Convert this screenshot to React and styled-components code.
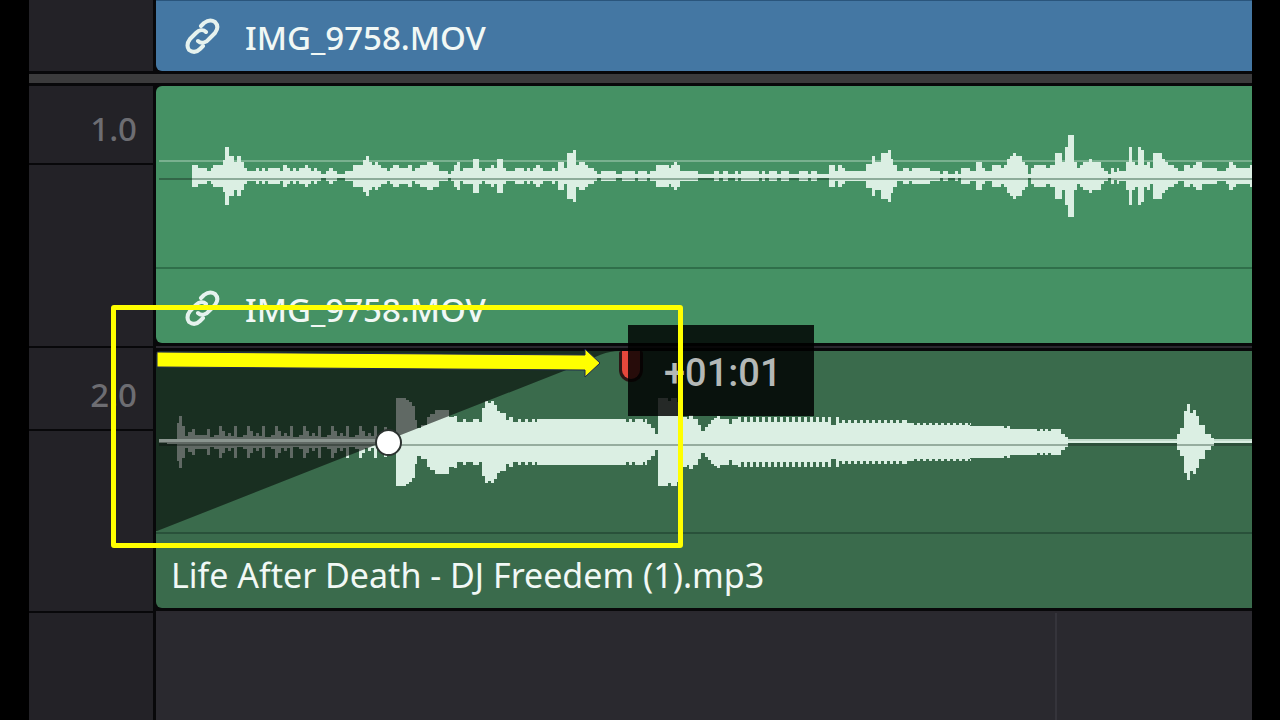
import React from 'react';
import styled, { createGlobalStyle } from 'styled-components';

const GlobalStyle = createGlobalStyle`
  * { box-sizing: border-box; }
  body { margin: 0; background: #000; font-family: "Noto Sans", sans-serif; }
`;

const Timeline = styled.main`
  position: relative;
  display: flex;
  flex-direction: column;
  min-height: 100vh;
  padding: 0 28px 0 29px;
  overflow: hidden;
  background: #000;
`;

const Track = styled.section`
  display: flex;
  flex: ${(p) => (p.$fill ? '1 0 auto' : '0 0 auto')};
`;

const Header = styled.div`
  display: flex;
  flex-direction: column;
  flex: 0 0 127px;
  border-right: 3px solid #08080a;
  border-bottom: ${(p) => (p.$open ? 0 : 2)}px solid #08080a;
  background: #232227;
`;

const HeaderValue = styled.div`
  display: flex;
  align-items: center;
  justify-content: flex-end;
  height: ${(p) => p.$height}px;
  padding: ${(p) => p.$top}px 16px 0 0;
  border-bottom: 2px solid #08080a;
  color: #6d6d72;
  font-size: 33px;
  font-weight: 500;
  line-height: 44px;
`;

const Lane = styled.div`
  flex: 1;
  min-width: 0;
  padding: ${(p) => p.$top}px 0 3px;
  border-bottom: 2px solid #2a282e;
  background: #08080a;
`;

const EmptyLane = styled.div`
  flex: 1;
  background: #2a292f;
`;

const FrameMark = styled.div`
  width: 82%;
  height: 100%;
  border-right: 2px solid #35343b;
  box-sizing: content-box;
`;

const VideoLane = styled.div`
  flex: 1;
  min-width: 0;
  background: #08080a;
`;

const VideoClip = styled.article`
  display: flex;
  align-items: center;
  height: 71px;
  padding: 4px 0 0 28px;
  border-top: 1px solid #2a557c;
  border-radius: 0 0 0 6px;
  background: #4477a3;
`;

const Splitter = styled.div`
  height: 15px;
  flex: none;
  border: solid #08080a;
  border-width: 3px 0;
  background: #3b3b3c;
`;

const AudioClip = styled.article`
  overflow: hidden;
  border-radius: 6px 0 0 6px;
  background: ${(p) => p.$color};
`;

const Wave = styled.svg`
  display: block;
`;

const ClipFooter = styled.div`
  display: flex;
  align-items: center;
  height: 76px;
  padding: 8px 0 0 ${(p) => (p.$linked ? 28 : 15)}px;
  border-top: 2px solid ${(p) => p.$line};
`;

const ClipName = styled.span`
  color: #f1f8f5;
  font-size: ${(p) => (p.$long ? 34 : 33)}px;
  font-weight: ${(p) => (p.$long ? 400 : 500)};
  line-height: 44px;
  white-space: nowrap;
`;

const LinkSvg = styled.svg`
  flex: none;
  margin: 0 24px 4px 0;
  fill: none;
  stroke: #e6f2ee;
  stroke-width: 4;
  stroke-linecap: round;
  stroke-linejoin: round;
`;

const FadeHandle = styled.div`
  position: absolute;
  left: 619px;
  top: 351px;
  width: 24px;
  height: 31px;
  border: 3px solid #2b1716;
  border-top: 0;
  border-radius: 2px 2px 12px 12px;
  background: #e5483c;
`;

const Tooltip = styled.output`
  position: absolute;
  left: 628px;
  top: 325px;
  width: 186px;
  height: 91px;
  padding-left: 36px;
  background: rgba(0, 0, 0, 0.83);
  color: #b4b8b6;
  font-family: Roboto, sans-serif;
  font-size: 38px;
  font-weight: 500;
  line-height: 96px;
`;

const CurveKnob = styled.div`
  position: absolute;
  left: 375px;
  top: 429px;
  width: 27px;
  height: 27px;
  border: 2px solid #2c3330;
  border-radius: 50%;
  background: #fff;
`;

const Highlight = styled.div`
  position: absolute;
  left: 111px;
  top: 305px;
  width: 572px;
  height: 243px;
  border: 5px solid #ff0;
  border-radius: 3px;
`;

const Arrow = styled.svg`
  position: absolute;
  left: 156px;
  top: 348px;
`;

/* Each pair is the x where a bar starts and its half height. */
const VOICE = [
  [192,11],[198,8],[207,5],[211,8],[213,11],[223,16],[225,29],[229,20],[234,14],[237,20],[241,14],[244,8],[247,5],
  [256,8],[259,5],[262,8],[265,5],[268,8],[280,5],[283,11],[287,8],[290,5],[293,8],[296,5],[299,8],[305,11],[308,8],
  [311,5],[314,8],[317,5],[321,2],[326,5],[329,8],[333,5],[337,2],[345,5],[353,11],[363,16],[366,20],[369,14],[372,11],
  [375,14],[378,11],[381,8],[387,5],[390,8],[393,11],[399,8],[408,11],[412,5],[415,8],[420,11],[427,14],[433,11],
  [439,5],[448,2],[451,5],[454,11],[457,14],[460,5],[463,8],[473,17],[479,8],[482,5],[485,8],[491,11],[494,8],[497,17],
  [503,8],[506,5],[515,8],[524,5],[527,8],[530,5],[533,8],[536,11],[540,8],[543,5],[552,8],[555,5],[558,14],[564,8],
  [567,23],[573,26],[576,11],[579,14],[585,11],[588,8],[594,5],[597,2],[601,5],[616,2],[622,5],[635,2],[638,5],[647,2],
  [650,5],[656,11],[669,8],[671,11],[674,14],[677,11],[680,5],[698,2],[714,5],[719,2],[723,5],[728,2],[735,5],[738,2],
  [741,5],[759,2],[762,5],[765,2],[769,5],[777,2],[781,5],[789,2],[799,5],[808,2],[811,5],[817,2],[829,11],[835,5],
  [838,11],[842,8],[845,5],[866,12],[872,20],[875,14],[881,23],[888,26],[891,17],[893,11],[897,5],[903,8],[909,5],
  [912,8],[930,5],[940,2],[943,5],[948,2],[955,5],[958,2],[961,8],[970,5],[976,14],[982,8],[985,5],[992,11],[1001,8],
  [1004,11],[1007,17],[1010,20],[1013,23],[1016,20],[1022,14],[1025,11],[1028,2],[1031,8],[1034,11],[1046,8],[1050,11],
  [1055,23],[1062,14],[1065,29],[1068,41],[1074,14],[1077,8],[1080,11],[1083,14],[1089,17],[1092,14],[1101,8],[1104,5],
  [1108,2],[1111,8],[1114,4],[1117,8],[1119,5],[1126,14],[1129,29],[1132,14],[1135,11],[1138,29],[1141,26],[1144,11],
  [1147,14],[1150,8],[1153,23],[1162,17],[1165,14],[1168,11],[1174,8],[1178,5],[1184,11],[1190,8],[1193,11],[1196,14],
  [1202,8],[1217,5],[1226,8],[1229,14],[1233,11],[1236,8],[1250,11],[1252,0],
];

const ripple = (from, to, high, low) => {
  const bars = [];
  for (let x = from; x < to; x += 6) bars.push([x, high], [x + 3, low]);
  return bars;
};

const beats = (from, to) => {
  const bars = [];
  for (let x = from; x < to; x += 28) {
    bars.push([x, 16], [x + 3, 11], [x + 6, 6], [x + 9, 9], [x + 12, 6], [x + 15, 16], [x + 18, 5], [x + 24, 7]);
  }
  return bars;
};

const MUSIC = [
  [167,2],[177,19],[179,26],[182,16],[185,6],[188,10],[192,13],[195,7],[207,13],[210,5],[214,7],
  ...beats(219, 370),
  [384,15],[387,3],[396,44],[406,42],[409,40],[412,36],[415,22],[417,14],[421,17],[427,25],[430,28],[435,32],[449,25],
  [454,26],[457,20],[463,23],[466,20],[473,23],[479,20],[482,34],[485,41],[488,39],[491,41],[494,37],[497,31],[500,29],
  [506,22],[509,25],[513,20],[518,23],[521,20],[525,23],[528,20],[532,23],[535,20],[537,23],[626,20],[629,23],[632,20],
  [635,23],[643,20],[645,23],[647,18],[651,14],[655,8],[658,44],[668,41],[671,44],[677,40],[680,30],[683,25],[687,23],
  [689,27],[693,23],[698,17],[701,11],[705,15],[708,18],[711,22],[714,24],[717,26],[720,23],[729,18],[732,23],
  ...ripple(738, 830, 25, 20),
  [831,17],[836,25],
  ...ripple(839, 905, 19, 22),
  [907,19],
  ...ripple(914, 970, 17, 19),
  [970,16],[1004,14],[1007,16],[1010,13],[1037,11],[1040,13],[1043,11],[1045,13],[1048,11],[1051,13],[1061,8],[1065,5],
  [1068,1],[1177,8],[1180,14],[1184,31],[1187,38],[1190,29],[1193,32],[1196,26],[1199,17],[1205,8],[1211,4],[1214,1],
  [1252,0],
];

const CLIP_START = 156;

function wavePath(bars, middle) {
  const upper = [];
  const lower = [];
  bars.forEach(([x, h], i) => {
    const end = i + 1 < bars.length ? bars[i + 1][0] : x;
    const a = x - CLIP_START;
    const b = end - CLIP_START;
    upper.push(`${a},${middle - h}`, `${b},${middle - h}`);
    lower.unshift(`${b},${middle + h}`, `${a},${middle + h}`);
  });
  return `M${upper.concat(lower).join(' ')}Z`;
}

function LinkIcon() {
  return (
    <LinkSvg width="37" height="38" viewBox="0 0 37 38" aria-hidden="true">
      <path d="M17 9 L20 6 C24 3 28 3 31 5 C34 8 34 12 31 16 L25 22 C22 26 17 27 14 24" />
      <path d="M22 15 C19 12 15 13 12 16 L6 22 C3 26 3 30 5 33 C9 36 13 35 16 32 L19 29" />
    </LinkSvg>
  );
}

function LinkedName() {
  return (
    <>
      <LinkIcon />
      <ClipName>IMG_9758.MOV</ClipName>
    </>
  );
}

export default function App() {
  return (
    <>
      <GlobalStyle />
      <Timeline>
        <Track>
          <Header $open />
          <VideoLane>
            <VideoClip><LinkedName /></VideoClip>
          </VideoLane>
        </Track>
        <Splitter />
        <Track>
          <Header><HeaderValue $height={79} $top={8}>1.0</HeaderValue></Header>
          <Lane $top={0}>
            <AudioClip $color="#459164">
              <Wave width="1096" height="181" aria-label="Waveform">
                <rect x="3" y="74" width="1093" height="2" fill="#79b18f" />
                <rect x="3" y="92" width="1093" height="2" fill="#356f4d" />
                <path d={wavePath(VOICE, 90)} fill="#dbefe3" />
                <rect x="3" y="92" width="1093" height="2" fill="#2f5a40" opacity="0.45" />
              </Wave>
              <ClipFooter $linked $line="#2f6f4a"><LinkedName /></ClipFooter>
            </AudioClip>
          </Lane>
        </Track>
        <Track>
          <Header><HeaderValue $height={83} $top={12}>2.0</HeaderValue></Header>
          <Lane $top={3}>
            <AudioClip $color="#3a6b4c">
              <Wave width="1096" height="181" aria-label="Waveform">
                <rect x="3" y="88" width="1093" height="4" fill="#c3dccd" />
                <rect x="3" y="92" width="1093" height="3" fill="#2c523b" />
                <path d={wavePath(MUSIC, 91)} fill="#dbefe3" />
                <rect x="3" y="93" width="1093" height="2" fill="#2f4a3a" opacity="0.4" />
                <path d="M0 0H464C450 0 440 5 428 12L1 180H0Z" fill="#000" opacity="0.56" />
                <rect x="3" y="88" width="218" height="3" fill="#8b9690" />
              </Wave>
              <ClipFooter $line="#29513a">
                <ClipName $long>Life After Death - DJ Freedem (1).mp3</ClipName>
              </ClipFooter>
            </AudioClip>
          </Lane>
        </Track>
        <Track $fill>
          <Header $open />
          <EmptyLane><FrameMark /></EmptyLane>
        </Track>

        <FadeHandle />
        <Tooltip>+01:01</Tooltip>
        <CurveKnob />
        <Arrow width="448" height="32" aria-hidden="true">
          <path d="M1 4L429 7V1L444 15L429 29V22L1 19Z" fill="#ff0" stroke="#1e2650" strokeWidth="1" />
        </Arrow>
        <Highlight />
      </Timeline>
    </>
  );
}
